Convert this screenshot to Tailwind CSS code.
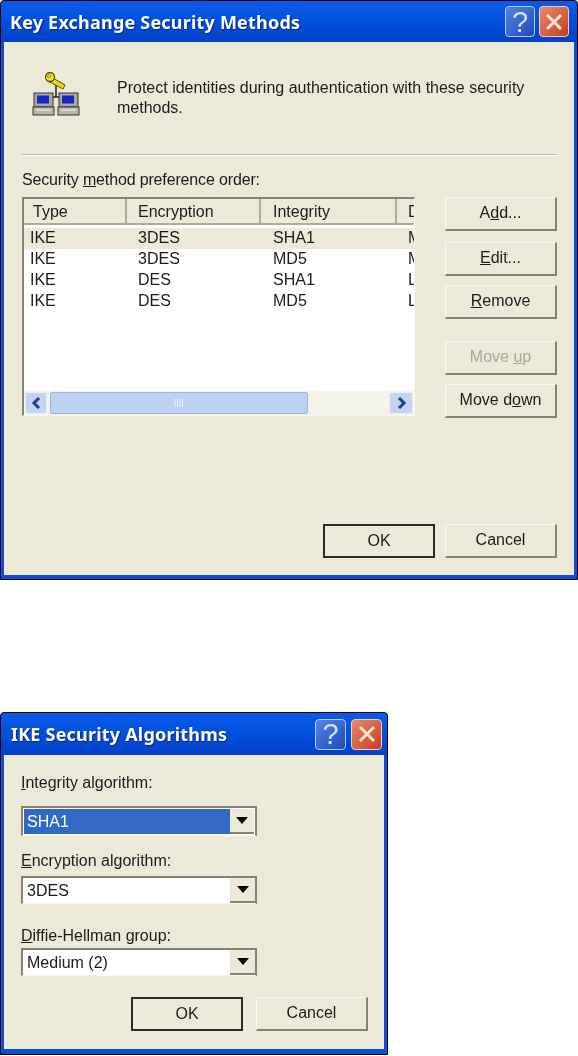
<!DOCTYPE html>
<html><head><meta charset="utf-8"><script src="https://cdn.jsdelivr.net/npm/@tailwindcss/browser@4"></script></head>
<body class="bg-white">
<div class="w-[578px] h-[1056px] overflow-hidden bg-white text-[16px] leading-[20px] text-[#1c1c1c] [font-family:'Liberation_Sans',sans-serif] blur-[0.4px]">

<!-- Dialog 1 -->
<section class="w-[578px] h-[580px] border border-black bg-[#0a4fd8] rounded-t-[4px] flex flex-col">
  <header class="h-[41px] shrink-0 bg-gradient-to-b from-[#0a5ce8] via-[#0250dc] to-[#0340c8] flex items-center pl-[9px] pr-[8px] rounded-t-[4px]">
    <h1 class="flex-1 text-white font-bold text-[18px] tracking-[0.2px] [font-family:'Noto_Sans',sans-serif] [text-shadow:1px_1px_1px_#0a2a80]">Key Exchange Security Methods</h1>
    <div class="flex gap-[4px]">
      <div class="w-[30px] h-[31px] rounded-[4px] border border-[#b8ccf0] bg-gradient-to-br from-[#5585e0] to-[#1e48c0] flex items-center justify-center text-[#d4e2f8] text-[29px]">?</div>
      <div class="w-[30px] h-[31px] rounded-[4px] border border-[#e8d0c8] bg-gradient-to-br from-[#e88868] to-[#c83a18] flex items-center justify-center">
        <svg width="18" height="18" viewBox="0 0 18 18"><path d="M2 2L16 16M16 2L2 16" stroke="#f6e0d6" stroke-width="3"/></svg>
      </div>
    </div>
  </header>
  <div class="flex-1 mx-[3px] mb-[4px] bg-[#ece9d8] flex flex-col pl-[18px] pr-[16px] pb-[17px]">
    <div class="flex h-[112px] pt-[30px]">
      <svg class="w-[48px] h-[46px] ml-[10px] shrink-0" viewBox="0 0 48 46">
        <path d="M24 13V25M20 25H27" stroke="#222" stroke-width="1.5" fill="none"/>
        <path d="M19 5L33 13L31 17L16 9Z" fill="#e8d820" stroke="#5a5000" stroke-width="1"/>
        <circle cx="18" cy="5" r="4.5" fill="#f0e020" stroke="#5a5000" stroke-width="1.3"/>
        <circle cx="17" cy="4" r="1.4" fill="#fff" stroke="#5a5000" stroke-width="0.7"/>
        <rect x="2" y="21" width="19" height="14" fill="#a8a8a0" stroke="#333"/><rect x="5" y="23.500" width="12" height="8" fill="#1828c8"/>
        <rect x="1" y="35" width="21" height="8" fill="#b8b8a8" stroke="#333"/><path d="M4 38H19" stroke="#f4f4f0"/>
        <rect x="27" y="21" width="19" height="14" fill="#a8a8a0" stroke="#333"/><rect x="30" y="23.500" width="12" height="8" fill="#1828c8"/>
        <rect x="26" y="35" width="21" height="8" fill="#b8b8a8" stroke="#333"/><path d="M29 38H44" stroke="#f4f4f0"/>
      </svg>
      <p class="ml-[37px] w-[420px] pt-[6px]">Protect identities during authentication with these security methods.</p>
    </div>
    <div class="h-[2px] w-[534px] bg-[#b8b5a6] border-b border-white"></div>
    <p class="mt-[14px] h-[20px] tracking-[-0.15px]">Security <u>m</u>ethod preference order:</p>
    <div class="mt-[7px] flex gap-[30px]">
      <div class="w-[393px] h-[219px] shrink-0 border-t-2 border-l-2 border-[#85826f] border-r border-b border-r-[#f8f7f0] border-b-[#f8f7f0] bg-white flex flex-col overflow-hidden">
        <div class="h-[26px] shrink-0 bg-[#ece9d8] flex border-b-2 border-[#aeab9b]">
          <span class="w-[103px] shrink-0 pl-[9px] pt-[3px] border-r-2 border-[#aeab9b]">Type</span>
          <span class="w-[134px] shrink-0 pl-[11px] pt-[3px] border-r-2 border-[#aeab9b]">Encryption</span>
          <span class="w-[136px] shrink-0 pl-[12px] pt-[3px] border-r-2 border-[#aeab9b]">Integrity</span>
          <span class="shrink-0 pl-[11px] pt-[3px] whitespace-nowrap">Diffie-Hellman</span>
        </div>
        <div class="flex-1 pt-[3px]">
          <div class="flex h-[21px] bg-[#ece9d8]"><span class="w-[114px] shrink-0 pl-[6px]">IKE</span><span class="w-[135px] shrink-0">3DES</span><span class="w-[135px] shrink-0">SHA1</span><span class="shrink-0 whitespace-nowrap">Medium (2)</span></div>
          <div class="flex h-[21px]"><span class="w-[114px] shrink-0 pl-[6px]">IKE</span><span class="w-[135px] shrink-0">3DES</span><span class="w-[135px] shrink-0">MD5</span><span class="shrink-0 whitespace-nowrap">Medium (2)</span></div>
          <div class="flex h-[21px]"><span class="w-[114px] shrink-0 pl-[6px]">IKE</span><span class="w-[135px] shrink-0">DES</span><span class="w-[135px] shrink-0">SHA1</span><span class="shrink-0 whitespace-nowrap">Low (1)</span></div>
          <div class="flex h-[21px]"><span class="w-[114px] shrink-0 pl-[6px]">IKE</span><span class="w-[135px] shrink-0">DES</span><span class="w-[135px] shrink-0">MD5</span><span class="shrink-0 whitespace-nowrap">Low (1)</span></div>
        </div>
        <div class="h-[24px] shrink-0 bg-[#f3f3ec] flex items-center px-[1px] gap-[3px]">
          <div class="w-[22px] h-[22px] rounded-[2px] bg-[#c3d4f2] border border-[#e8eefa] flex items-center justify-center"><svg width="11" height="12" viewBox="0 0 11 12"><path d="M8 1L3 6L8 11" stroke="#27407e" stroke-width="3" fill="none"/></svg></div>
          <div class="w-[258px] h-[22px] rounded-[2px] bg-[#bdd1f5] border border-[#9db4dc] flex items-center justify-center"><svg width="11" height="8" viewBox="0 0 11 8"><path d="M1 0V8M3.5 0V8M6 0V8M8.5 0V8" stroke="#eef3fc" stroke-width="1"/></svg></div>
          <div class="flex-1"></div>
          <div class="w-[24px] h-[22px] rounded-[2px] bg-[#c3d4f2] border border-[#e8eefa] flex items-center justify-center"><svg width="11" height="12" viewBox="0 0 11 12"><path d="M3 1L8 6L3 11" stroke="#27407e" stroke-width="3" fill="none"/></svg></div>
        </div>
      </div>
      <div class="w-[112px] flex flex-col">
        <button class="h-[34px] pb-[1px] bg-[#ece9d8] border border-[#f8f7f0] border-r-2 border-b-2 border-r-[#85826f] border-b-[#85826f]">A<u>d</u>d...</button>
        <button class="mt-[11px] h-[34px] pb-[1px] bg-[#ece9d8] border border-[#f8f7f0] border-r-2 border-b-2 border-r-[#85826f] border-b-[#85826f]"><u>E</u>dit...</button>
        <button class="mt-[9px] h-[34px] pb-[1px] bg-[#ece9d8] border border-[#f8f7f0] border-r-2 border-b-2 border-r-[#85826f] border-b-[#85826f]"><u>R</u>emove</button>
        <button class="mt-[22px] h-[34px] pb-[1px] bg-[#ece9d8] text-[#a9a798] border border-[#f8f7f0] border-r-2 border-b-2 border-r-[#85826f] border-b-[#85826f]">Move <u>u</u>p</button>
        <button class="mt-[9px] h-[34px] pb-[1px] bg-[#ece9d8] border border-[#f8f7f0] border-r-2 border-b-2 border-r-[#85826f] border-b-[#85826f]">Move d<u>o</u>wn</button>
      </div>
    </div>
    <div class="mt-auto flex justify-end gap-[10px] pr-[1px]">
      <button class="w-[112px] h-[34px] pb-[1px] bg-[#ece9d8] border-2 border-[#2a2a22]">OK</button>
      <button class="w-[112px] h-[34px] pb-[1px] bg-[#ece9d8] border border-[#f8f7f0] border-r-2 border-b-2 border-r-[#85826f] border-b-[#85826f]">Cancel</button>
    </div>
  </div>
</section>

<!-- Dialog 2 -->
<section class="mt-[132px] w-[388px] h-[343px] border border-black bg-[#0a4fd8] rounded-t-[4px] flex flex-col">
  <header class="h-[42px] shrink-0 bg-gradient-to-b from-[#0a5ce8] via-[#0250dc] to-[#0340c8] flex items-center pl-[10px] pr-[5px] rounded-t-[4px]">
    <h2 class="flex-1 text-white font-bold text-[18px] tracking-[0.2px] [font-family:'Noto_Sans',sans-serif] [text-shadow:1px_1px_1px_#0a2a80]">IKE Security Algorithms</h2>
    <div class="flex gap-[5px]">
      <div class="w-[31px] h-[31px] rounded-[4px] border border-[#b8ccf0] bg-gradient-to-br from-[#5585e0] to-[#1e48c0] flex items-center justify-center text-[#d4e2f8] text-[29px]">?</div>
      <div class="w-[31px] h-[31px] rounded-[4px] border border-[#e8d0c8] bg-gradient-to-br from-[#e88868] to-[#c83a18] flex items-center justify-center">
        <svg width="18" height="18" viewBox="0 0 18 18"><path d="M2 2L16 16M16 2L2 16" stroke="#f6e0d6" stroke-width="3"/></svg>
      </div>
    </div>
  </header>
  <div class="flex-1 mx-[3px] mb-[5px] bg-[#ece9d8] flex flex-col pl-[17px] pr-[16px]">
    <p class="mt-[18px] h-[20px]"><u>I</u>ntegrity algorithm:</p>
    <div class="mt-[13px] w-[236px] h-[30px] border-t-2 border-l-2 border-[#85826f] border-r-2 border-r-[#85826f] border-b border-b-[#f8f7f0] bg-white flex p-[1px]">
      <span class="flex-1 bg-[#316ac5] text-white pl-[3px] leading-[26px]">SHA1</span>
      <span class="w-[24px] bg-[#ece9d8] border-b-2 border-[#85826f] flex items-center justify-center"><svg width="12" height="7" viewBox="0 0 12 7"><path d="M0 0H12L6 7Z" fill="#000"/></svg></span>
    </div>
    <p class="mt-[15px] h-[20px]"><u>E</u>ncryption algorithm:</p>
    <div class="mt-[5px] w-[236px] h-[28px] border-t-2 border-l-2 border-[#85826f] border-r-2 border-r-[#85826f] border-b border-b-[#f8f7f0] bg-white flex">
      <span class="flex-1 pl-[4px] leading-[26px]">3DES</span>
      <span class="w-[25px] bg-[#ece9d8] border-b-2 border-[#85826f] flex items-center justify-center"><svg width="12" height="7" viewBox="0 0 12 7"><path d="M0 0H12L6 7Z" fill="#000"/></svg></span>
    </div>
    <p class="mt-[22px] h-[20px]"><u>D</u>iffie-Hellman group:</p>
    <div class="mt-[2px] w-[236px] h-[28px] border-t-2 border-l-2 border-[#85826f] border-r-2 border-r-[#85826f] border-b border-b-[#f8f7f0] bg-white flex">
      <span class="flex-1 pl-[4px] leading-[26px]">Medium (2)</span>
      <span class="w-[25px] bg-[#ece9d8] border-b-2 border-[#85826f] flex items-center justify-center"><svg width="12" height="7" viewBox="0 0 12 7"><path d="M0 0H12L6 7Z" fill="#000"/></svg></span>
    </div>
    <div class="mt-[21px] flex gap-[13px] pl-[110px]">
      <button class="w-[112px] h-[34px] pb-[1px] bg-[#ece9d8] border-2 border-[#2a2a22]">OK</button>
      <button class="w-[112px] h-[34px] pb-[1px] bg-[#ece9d8] border border-[#f8f7f0] border-r-2 border-b-2 border-r-[#85826f] border-b-[#85826f]">Cancel</button>
    </div>
  </div>
</section>
</div>
</body></html>
